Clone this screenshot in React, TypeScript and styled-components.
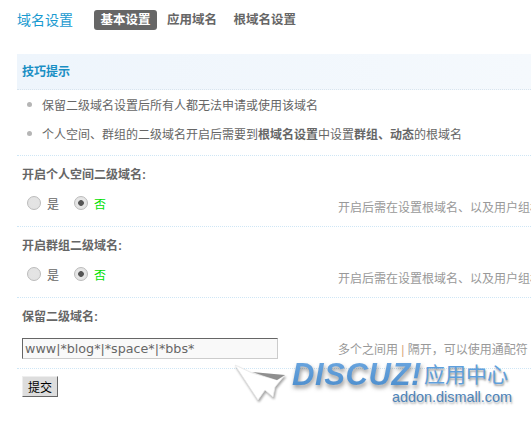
import React from "react";
import styled, { createGlobalStyle } from "styled-components";

const GlobalStyle = createGlobalStyle`
	html, body {
		margin: 0;
		padding: 0;
		background: #fff;
		overflow: hidden;
	}
	body {
		width: 531px;
		height: 422px;
		font-family: "Liberation Sans", "Noto Sans CJK SC", sans-serif;
		font-size: 12px;
		color: #666;
	}
`;

const Page = styled.div`
	position: relative;
	width: 531px;
	height: 422px;
	overflow: hidden;
	padding-left: 17px;
	box-sizing: border-box;
`;

const Header = styled.div`
	display: flex;
	align-items: center;
	height: 20px;
	margin-top: 10px;
`;

const Title = styled.h3`
	margin: 0 21px 0 0;
	font-size: 14px;
	font-weight: 400;
	line-height: 20px;
	color: #1a9ad0;
`;

const Tab = styled.a<{ $active?: boolean }>`
	display: block;
	height: 20px;
	line-height: 20px;
	padding: 0 6.5px;
	margin-right: 3.5px;
	border-radius: 3px;
	font-size: 12.5px;
	font-weight: 700;
	color: ${p => (p.$active ? "#fff" : "#666")};
	background: ${p => (p.$active ? "#666" : "transparent")};
`;

const TipBar = styled.div`
	height: 35px;
	margin-top: 24px;
	padding-left: 5px;
	line-height: 37px;
	font-size: 12px;
	font-weight: 700;
	color: #1a8fc4;
	background: linear-gradient(to right, #eef5fc, #f5f9fd);
	border-bottom: 1px dotted #d8e4ee;
`;

const TipList = styled.ul`
	list-style: none;
	margin: 0;
	padding: 0 0 0 10px;
	height: 65px;
`;

const TipItem = styled.li`
	display: flex;
	align-items: center;
	height: 29px;
	color: #666;
	white-space: nowrap;

	&::before {
		content: "";
		width: 5px;
		height: 5px;
		margin-right: 10px;
		border-radius: 50%;
		background: #b5b5b5;
		flex: none;
	}

	b {
		color: #666;
	}
`;

const Section = styled.div`
	border-top: 1px dotted #cfe6f5;
	padding-left: 5px;
	height: 70px;
	box-sizing: content-box;
`;

const Label = styled.div`
	padding-top: 11px;
	height: 17px;
	line-height: 17px;
	font-weight: 700;
	color: #666;
`;

const ControlRow = styled.div<{ $radios?: boolean }>`
	display: flex;
	align-items: center;
	height: 20px;
	margin-top: ${p => (p.$radios ? "9px" : "12px")};
	white-space: nowrap;
`;

const RadioGroup = styled.div`
	display: flex;
	align-items: center;
	width: 316px;
	padding-left: 5px;
	box-sizing: border-box;
	flex: none;
`;

const Radio = styled.span<{ $checked?: boolean }>`
	display: block;
	width: 12px;
	height: 12px;
	border-radius: 50%;
	border: 1px solid #bbb;
	background: radial-gradient(circle at 50% 50%, ${p => (p.$checked ? "#555 0, #555 2.5px, #e6e6e6 3.2px" : "#e4e4e4 0")}, #e2e2e2 100%);
	box-sizing: content-box;
`;

const RadioText = styled.span<{ $on?: boolean }>`
	margin: 0 15px 0 6px;
	color: ${p => (p.$on ? "#00e000" : "#666")};
`;

const Hint = styled.span<{ $low?: boolean }>`
	color: #999;
	position: relative;
	top: ${p => (p.$low ? "3px" : "0")};

	i {
		font-style: normal;
		color: #d9a679;
	}
`;

const InputBox = styled.input`
	display: block;
	width: 256px;
	height: 21px;
	padding: 0 2px;
	margin: 0 60px 0 0;
	box-sizing: border-box;
	flex: none;
	border: 1px solid;
	border-color: #666 #ccc #ccc #666;
	background: #f9f9f9;
	font-family: "DejaVu Sans", sans-serif;
	font-size: 12.7px;
	color: #666;
	outline: none;
`;

const SubmitRow = styled.div`
	border-top: 1px dotted #cfe6f5;
	padding: 7px 0 0 5px;
`;

const SubmitButton = styled.button`
	display: block;
	width: 36px;
	height: 21px;
	padding: 0;
	box-sizing: border-box;
	border: 1px solid;
	border-color: #eee #666 #666 #eee;
	background: #ddd;
	font-family: "Liberation Sans", "Noto Sans CJK SC", sans-serif;
	font-size: 12px;
	color: #000;
`;

const Watermark = styled.div`
	position: absolute;
	left: 232px;
	top: 362px;
	width: 290px;
	height: 50px;
`;

const Cursor = styled.svg`
	position: absolute;
	left: 0;
	top: 0;
	filter: drop-shadow(1px 2px 1px rgba(0, 0, 0, 0.35));
`;

const BrandShadow = styled.div`
	position: absolute;
	left: 0;
	top: 0;
	filter: drop-shadow(1px 3px 2px rgba(40, 40, 40, 0.5));
`;

const Brand = styled.span`
	position: absolute;
	left: 60px;
	top: -2px;
	font-family: "Liberation Sans", sans-serif;
	font-size: 31px;
	font-weight: 700;
	font-style: italic;
	line-height: 30px;
	letter-spacing: 0.6px;
	background: linear-gradient(to bottom, #6ba6e0, #4a8ccc);
	-webkit-background-clip: text;
	background-clip: text;
	color: transparent;
`;

const BrandCn = styled.span`
	position: absolute;
	left: 192px;
	top: -4px;
	font-family: "Noto Sans CJK SC", sans-serif;
	font-size: 21px;
	line-height: 30px;
	color: #5f9fdc;
	white-space: nowrap;
	text-shadow: 1px 2px 2px rgba(40, 40, 40, 0.45);
`;

const BrandUrl = styled.span`
	position: absolute;
	left: 160px;
	top: 27px;
	font-family: "Liberation Sans", sans-serif;
	font-size: 14.4px;
	line-height: 16px;
	color: #4d83b8;
	text-shadow: 1px 2px 2px rgba(40, 40, 40, 0.35);
`;

const App = () => {
	return (
		<Page>
			<GlobalStyle />
			<Header>
				<Title>域名设置</Title>
				<Tab $active>基本设置</Tab>
				<Tab>应用域名</Tab>
				<Tab>根域名设置</Tab>
			</Header>
			<TipBar>技巧提示</TipBar>
			<TipList>
				<TipItem>保留二级域名设置后所有人都无法申请或使用该域名</TipItem>
				<TipItem>
					<span>
						个人空间、群组的二级域名开启后需要到<b>根域名设置</b>中设置<b>群组、动态</b>的根域名
					</span>
				</TipItem>
			</TipList>
			<Section>
				<Label>开启个人空间二级域名:</Label>
				<ControlRow $radios>
					<RadioGroup>
						<Radio />
						<RadioText>是</RadioText>
						<Radio $checked />
						<RadioText $on>否</RadioText>
					</RadioGroup>
					<Hint $low>开启后需在设置根域名、以及用户组权限中开启相应功能</Hint>
				</ControlRow>
			</Section>
			<Section>
				<Label>开启群组二级域名:</Label>
				<ControlRow $radios>
					<RadioGroup>
						<Radio />
						<RadioText>是</RadioText>
						<Radio $checked />
						<RadioText $on>否</RadioText>
					</RadioGroup>
					<Hint $low>开启后需在设置根域名、以及用户组权限中开启相应功能</Hint>
				</ControlRow>
			</Section>
			<Section>
				<Label>保留二级域名:</Label>
				<ControlRow>
					<InputBox readOnly value="www|*blog*|*space*|*bbs*" />
					<Hint>
						多个之间用 <i>|</i> 隔开，可以使用通配符
					</Hint>
				</ControlRow>
			</Section>
			<SubmitRow>
				<SubmitButton>提交</SubmitButton>
			</SubmitRow>
			<Watermark>
				<Cursor width="58" height="48" viewBox="0 0 58 48">
					<path d="M3 3 L20 11 L45 18 L53 13 L43 25 L41 35 L33 28 L26 38 Z" fill="#fff" stroke="#e8e8e8" strokeWidth="0.8" />
					<path d="M20 10 L53 13 L45 18 Z" fill="#8f8f8f" />
				</Cursor>
				<BrandShadow>
					<Brand>DISCUZ!</Brand>
				</BrandShadow>
				<BrandCn>应用中心</BrandCn>
				<BrandUrl>addon.dismall.com</BrandUrl>
			</Watermark>
		</Page>
	);
};

export default App;
